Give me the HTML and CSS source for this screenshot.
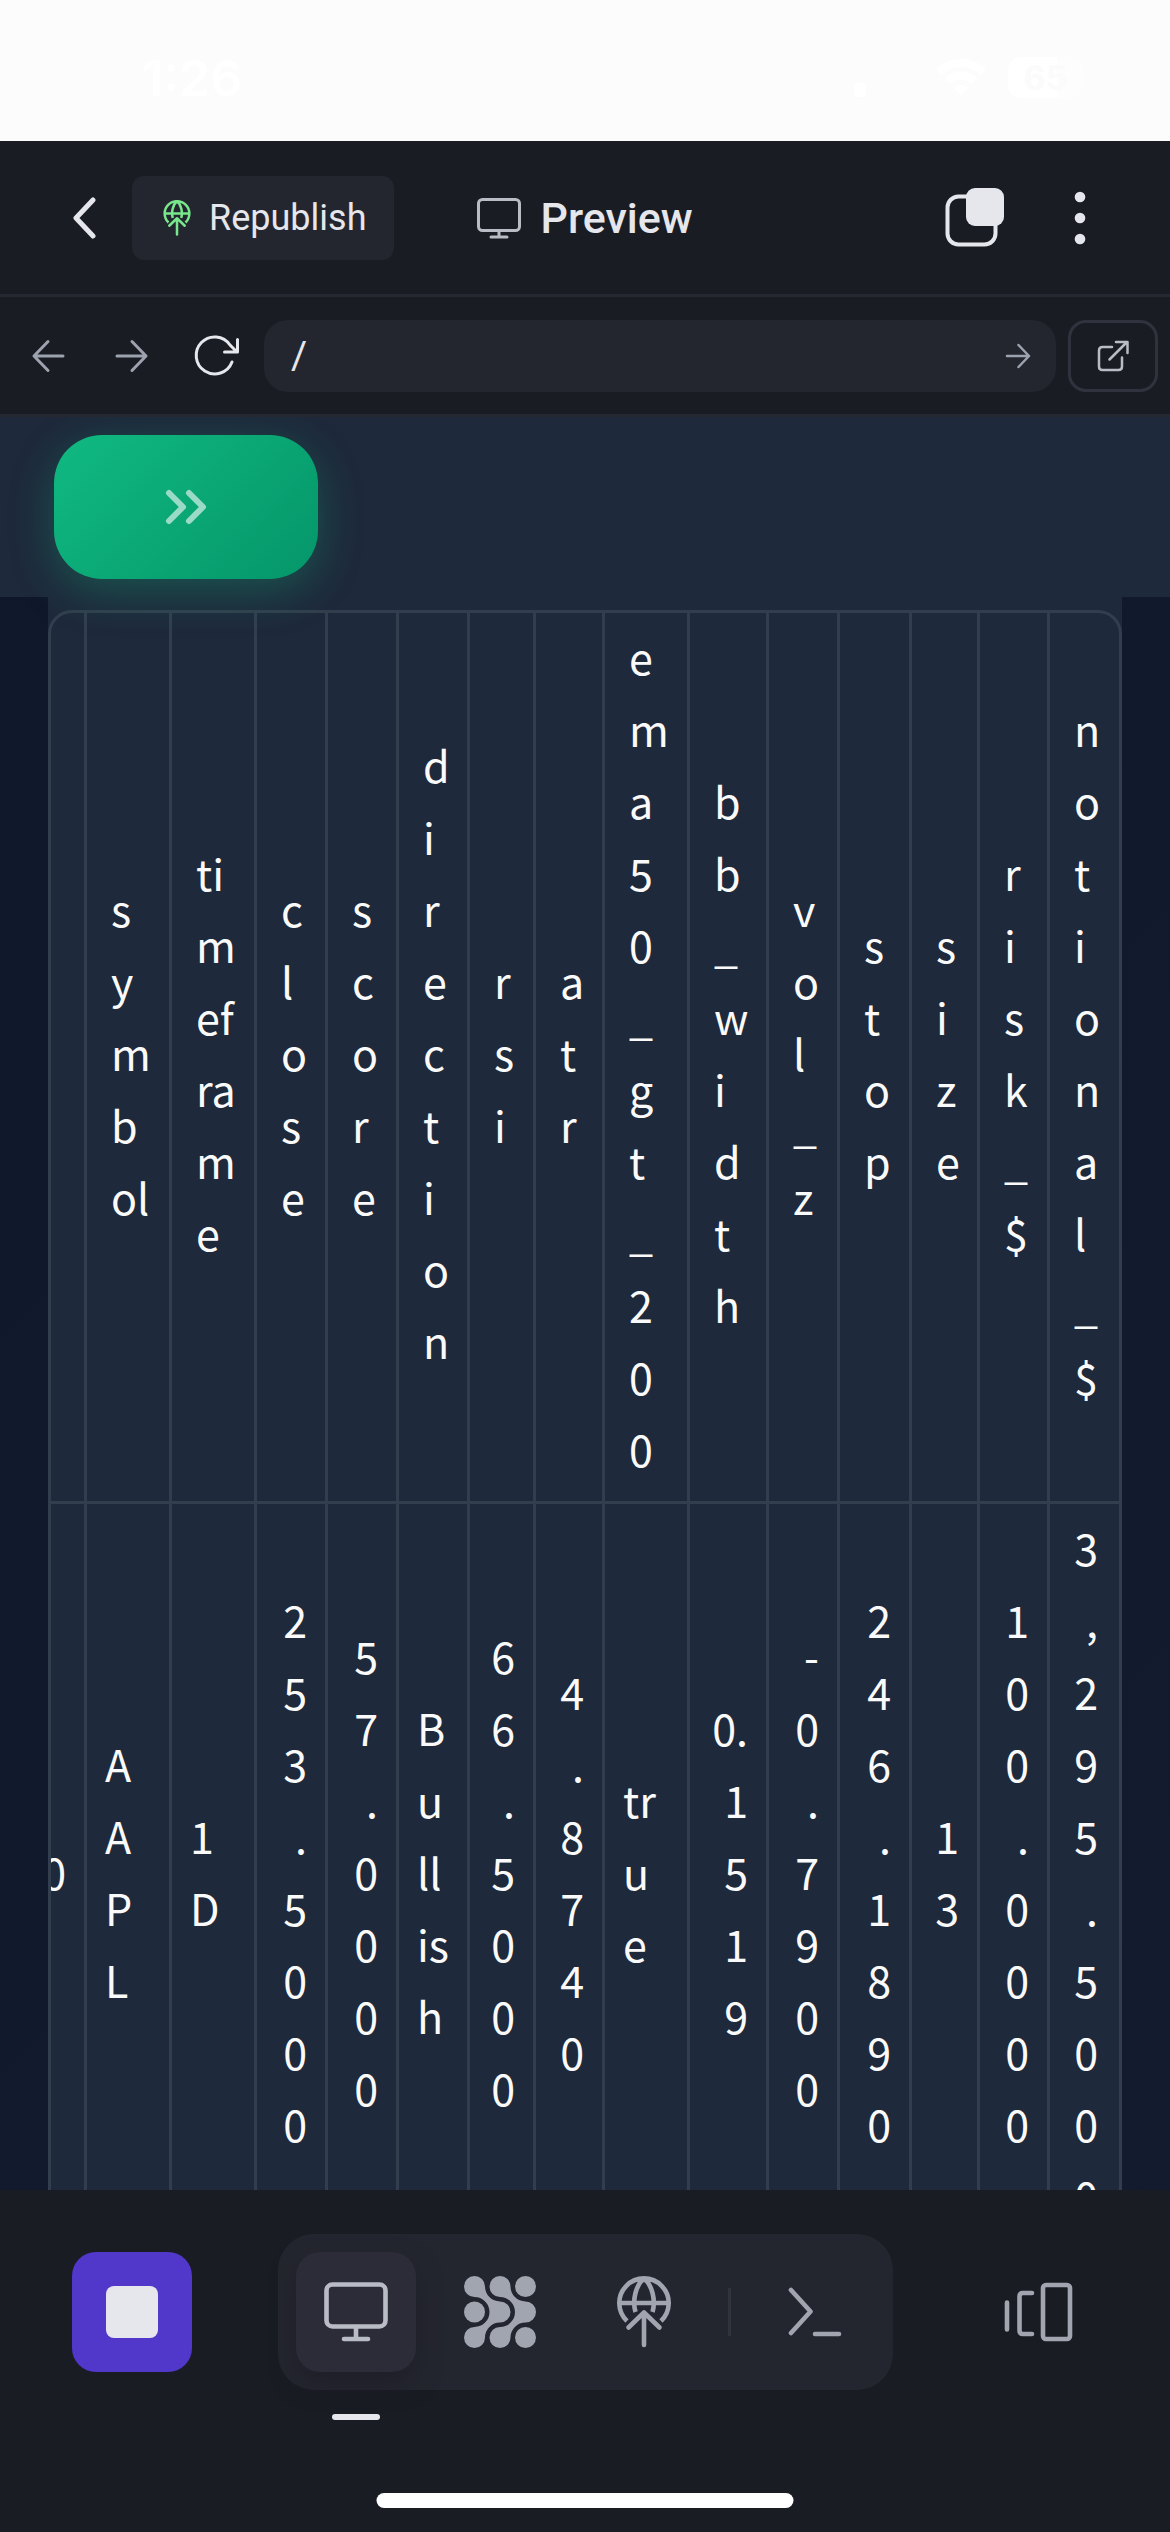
FILE: index.html
```html
<!DOCTYPE html>
<html lang="en">
<head>
<meta charset="utf-8">
<meta name="viewport" content="width=device-width, initial-scale=1">
<title>Preview</title>
<link rel="stylesheet" href="styles.css">
</head>
<body>
<div class="app">
  <div class="status">
    <span class="status-time">1:26</span>
    <div class="status-icons">
      <svg class="signal" width="60" height="40" viewBox="0 0 60 40"><rect x="0" y="25" width="12" height="14" rx="4"/></svg>
      <svg width="52" height="38" viewBox="0 0 52 38"><path d="M26 0C36 0 45 4 51 10l-5 6C41 11 34 8 26 8S11 11 6 16l-5-6C7 4 16 0 26 0Z"/><path d="M26 13c7 0 12 2 16 6l-5 6c-3-3-7-4-11-4s-8 1-11 4l-5-6c4-4 9-6 16-6Z"/><path d="M26 26c3 0 5 1 7 3l-7 8-7-8c2-2 4-3 7-3Z"/></svg>
      <span class="battery">65</span>
    </div>
  </div>

  <header class="header">
    <button class="plain back" aria-label="Back"><svg width="24" height="42" viewBox="0 0 24 42"><path d="M21 3 4 21l17 18" stroke-width="5"/></svg></button>
    <button class="republish">
      <svg class="green" width="28" height="36" viewBox="0 0 54 72" stroke-width="5"><use href="#publish"/></svg>
      Republish
    </button>
    <h1 class="title"><svg width="46" height="42" viewBox="0 0 46 42" stroke-width="3"><rect x="2.500" y="2.500" width="41" height="31" rx="4"/><path d="M23 34v6M15 40h16"/></svg>Preview</h1>
    <button class="plain tabs" aria-label="Tabs"><svg width="60" height="60" viewBox="0 0 60 60"><rect x="2.500" y="8.500" width="48" height="48" rx="11" stroke-width="4"/><rect class="solid" x="21" y="0" width="38" height="38" rx="9" stroke="none"/></svg></button>
    <button class="plain more" aria-label="More"><svg class="solid" width="12" height="54" viewBox="0 0 12 54" stroke="none"><circle cx="6" cy="6" r="5.300"/><circle cx="6" cy="27" r="5.300"/><circle cx="6" cy="48" r="5.300"/></svg></button>
  </header>

  <form class="toolbar">
    <button type="button" class="plain nav" aria-label="Go back"><svg width="36" height="36" viewBox="0 0 36 36" stroke-width="3"><path d="M33 18H4M18 3.500 4 18l14 14.500"/></svg></button>
    <button type="button" class="plain nav" aria-label="Go forward"><svg width="36" height="36" viewBox="0 0 36 36" stroke-width="3"><path d="M3 18h29M18 3.500 32 18 18 32.500"/></svg></button>
    <button type="button" class="plain nav bright" aria-label="Reload"><svg width="48" height="48" viewBox="0 0 48 48" stroke-width="3"><path d="M40 30A18.500 18.500 0 1 1 38 13l7 7M45.500 7.500V20H32.500"/></svg></button>
    <div class="url">
      <input type="text" value="/" aria-label="Path">
      <button class="plain" aria-label="Go"><svg width="28" height="28" viewBox="0 0 28 28" stroke-width="2.500"><path d="M3 14h22M14.500 3 25 14 14.500 25"/></svg></button>
    </div>
    <a class="open" href="#" aria-label="Open in new tab"><svg width="36" height="36" viewBox="0 0 36 36" stroke-width="2.500"><path d="M17 9H7.500Q4 9 4 12.500v16Q4 32 7.500 32h16q3.500 0 3.500-3.500V19.500M21 4h11.500v11M32 4 14.500 21.500"/></svg></a>
  </form>

  <main class="viewport">
    <div class="band"><button class="expand" aria-label="Open sidebar"><svg width="42" height="36" viewBox="0 0 42 36" stroke-width="6"><path d="m4 4 14 14L4 32M24 4l14 14-14 14"/></svg></button></div>
    <div class="block">
      <div class="table-wrap">
        <table>
          <colgroup><col class="w-index"><col class="w85"><col class="w85"><col class="w71"><col class="w71"><col class="w71"><col class="w66"><col class="w69"><col class="w85"><col class="w79"><col class="w71"><col class="w72"><col class="w68"><col class="w70"><col class="w69"></colgroup>
          <thead><tr><th></th><th>symbol</th><th>timeframe</th><th>close</th><th>score</th><th>direction</th><th>rsi</th><th>atr</th><th>ema50_gt_200</th><th>bb_width</th><th>vol_z</th><th>stop</th><th>size</th><th>risk_$</th><th>notional_$</th></tr></thead>
          <tbody><tr><td class="num">0</td><td>AAPL</td><td>1D</td><td class="num">253.5000</td><td class="num">57.0000</td><td>Bullish</td><td class="num">66.5000</td><td class="num">4.8740</td><td>true</td><td class="num">0.1519</td><td class="num">-0.7900</td><td class="num">246.1890</td><td class="num">13</td><td class="num">100.0000</td><td class="num">3,295.5000</td></tr></tbody>
        </table>
      </div>
    </div>
  </main>

  <footer class="dock">
    <button class="tile stop" aria-label="Stop"><span></span></button>
    <nav class="group">
      <button class="tile active" aria-label="Preview"><svg width="66" height="64" viewBox="0 0 66 64" stroke-width="4.600"><rect x="3.500" y="4.500" width="59" height="42" rx="6"/><path d="M33 47v12M21 59h24"/></svg></button>
      <button class="tile" aria-label="Agent"><svg class="solid" width="72" height="72" viewBox="0 0 72 72" stroke="none"><g id="pair"><path d="M10.500 0A10.500 10.500 0 0 1 21 10.500 15 15 0 0 0 36 25.500 10.500 10.500 0 0 1 36 46.500 15 15 0 0 0 21 61.500 10.500 10.500 0 1 1 10.500 51 15 15 0 0 0 10.500 21 10.500 10.500 0 0 1 10.500 0Z"/></g><use href="#pair" x="25.500"/><circle cx="10.500" cy="36" r="10.500"/><circle cx="61.500" cy="10.500" r="10.500"/><circle cx="61.500" cy="61.500" r="10.500"/></svg></button>
      <button class="tile" aria-label="Publish"><svg width="54" height="72" viewBox="0 0 54 72" stroke-width="4.600"><g id="publish"><path stroke-linecap="butt" d="M10 45A24.700 24.700 0 1 1 44 45M2.500 27h49M18.500 36C15 24 19 9 27 2.500 35 9 39 24 35.500 36"/><path d="M27 69V37M11.500 51.500 27 36.500l15.500 15"/></g></svg></button>
      <span class="divider"></span>
      <button class="tile" aria-label="Console"><svg width="54" height="50" viewBox="0 0 54 50" stroke-width="4.600"><path d="m3 3 19.500 21.500L3 46M27 47h24"/></svg></button>
    </nav>
    <button class="tile" aria-label="Switch panes"><svg width="70" height="60" viewBox="0 0 70 60" stroke-width="4.600"><path d="M4 20.500v27M29 11H20q-3.500 0-3.500 3.500v34q0 3.500 3.500 3.500h9"/><rect x="40" y="3" width="27" height="54" rx="3"/></svg></button>
    <span class="home"></span>
  </footer>
</div>
</body>
</html>
```
FILE: styles.css
```css
* { box-sizing: border-box; }

body {
  margin: 0;
  background: #1a1c24;
  color: #e6e7ec;
  font-family: Roboto, "Liberation Sans", sans-serif;
}

button, input { font: inherit; color: inherit; }
button { border: 0; padding: 0; cursor: pointer; }

svg {
  display: block;
  flex: none;
  fill: none;
  stroke: currentColor;
  stroke-linecap: round;
  stroke-linejoin: round;
}
.solid { fill: currentColor; }
svg.solid { stroke: none; }

.app {
  display: flex;
  flex-direction: column;
  height: 100vh;
}

/* Status bar */
.status {
  display: flex;
  justify-content: space-between;
  align-items: center;
  height: 141px;
  padding: 14px 87px 0 142px;
  background: #fcfcfc;
  color: #fff;
}
.status-time { font: 600 50px/60px Inter, sans-serif; }
.status-icons { display: flex; align-items: center; gap: 21px; }
.status-icons svg { fill: #fff; stroke: none; }
.battery {
  width: 75px;
  border-radius: 13px;
  background: linear-gradient(90deg, #fff 66%, #fdfdfd 66%);
  color: #fbfbfb;
  font: 700 34px/41px Inter, sans-serif;
  text-align: center;
}

/* App header */
.plain {
  display: flex;
  align-items: center;
  justify-content: center;
  background: none;
}
.header {
  display: flex;
  align-items: center;
  height: 156px;
  padding: 0 84px 0 72px;
  border-bottom: 3px solid #252731;
}
.republish {
  display: flex;
  align-items: center;
  gap: 18px;
  height: 84px;
  margin-left: 36px;
  padding: 0 28px 0 31px;
  border-radius: 12px;
  background: #24262f;
  font-size: 36px;
}
.green { color: #78e68c; }
.title {
  display: flex;
  align-items: center;
  gap: 18px;
  margin: 0 auto 0 82px;
  font-size: 43px;
  font-weight: 500;
}
.title svg { color: #b9bcc5; }
.more { margin-left: 69px; }

/* Address bar */
.toolbar {
  display: flex;
  align-items: center;
  height: 120px;
  padding: 0 12px 0 6px;
  border-bottom: 3px solid #252731;
}
.nav { width: 84px; height: 84px; color: #9ca2ae; }
.bright { color: #e6e7ec; }
.url {
  display: flex;
  flex: 1;
  align-items: center;
  min-width: 0;
  height: 72px;
  margin: 0 12px 0 6px;
  padding: 0 24px 0 27px;
  border-radius: 24px;
  background: #24262f;
}
.url input {
  flex: 1;
  min-width: 0;
  padding: 0;
  border: 0;
  outline: 0;
  background: none;
  font-size: 39px;
}
.url .plain { color: #9ca2ae; }
.open {
  display: flex;
  align-items: center;
  justify-content: center;
  width: 90px;
  height: 72px;
  border: 3px solid #30323d;
  border-radius: 18px;
  color: #b9bcc5;
}

/* Previewed page */
.viewport {
  flex: 1;
  min-height: 0;
  overflow: hidden;
  background: linear-gradient(135deg, #0f172a, #131b2e);
}
.band {
  height: 180px;
  padding: 18px 54px;
  background: #1e293b;
}
.expand {
  position: relative;
  display: flex;
  align-items: center;
  justify-content: center;
  width: 264px;
  height: 144px;
  border-radius: 48px;
  background: linear-gradient(135deg, #10b981, #059669);
  box-shadow: 0 12px 45px rgba(16, 185, 129, .3);
  color: #9bdac6;
}
.block {
  margin: 0 48px;
  padding-top: 13px;
  background: #1e293b;
}
.table-wrap {
  display: flex;
  justify-content: flex-end;
  overflow: hidden;
  border: 3px solid #323e4d;
  border-radius: 24px;
}
table {
  flex: none;
  width: calc(100% + 28px);
  table-layout: fixed;
  border-spacing: 0;
  color: #fafafa;
  font: 400 43px/72px "Noto Sans CJK JP", sans-serif;
}
.w-index { width: 64px; }
.w66 { width: 66px; }
.w68 { width: 68px; }
.w69 { width: 69px; }
.w70 { width: 70px; }
.w71 { width: 71px; }
.w72 { width: 72px; }
.w79 { width: 79px; }
.w85 { width: 85px; }
th, td {
  padding: 7px 18px 17px;
  border: solid #323e4d;
  border-width: 0 3px 3px 0;
  font-weight: 400;
  text-align: left;
  vertical-align: middle;
  overflow-wrap: anywhere;
}
th { padding-left: 24px; }
th:last-child, td:last-child { padding-right: 21px; border-right: 0; }
td.num { text-align: right; }

/* Bottom dock */
.dock {
  position: relative;
  display: flex;
  justify-content: space-between;
  align-items: flex-start;
  height: 342px;
  padding: 44px 72px 0;
}
.tile {
  position: relative;
  display: flex;
  align-items: center;
  justify-content: center;
  width: 120px;
  height: 120px;
  border-radius: 24px;
  background: none;
  color: #a0a5b0;
}
.dock > .tile { margin-top: 18px; }
.dock > .stop { background: #5237cb; }
.stop span {
  width: 52px;
  height: 52px;
  border-radius: 8px;
  background: #e6e7ec;
}
.group {
  display: flex;
  align-items: center;
  gap: 24px;
  padding: 18px;
  border-radius: 36px;
  background: #24262f;
}
.active {
  background: #2b2c38;
  box-shadow: 0 12px 24px rgba(26, 24, 36, .5);
  color: #b9bcc5;
}
.active::after {
  content: "";
  position: absolute;
  bottom: -48px;
  left: 36px;
  width: 48px;
  height: 6px;
  border-radius: 3px;
  background: #e6e7ec;
}
.divider { width: 3px; height: 48px; background: #30323d; }
.home {
  position: absolute;
  bottom: 24px;
  left: 50%;
  width: 417px;
  height: 15px;
  border-radius: 8px;
  background: #fff;
  transform: translateX(-50%);
}
```
